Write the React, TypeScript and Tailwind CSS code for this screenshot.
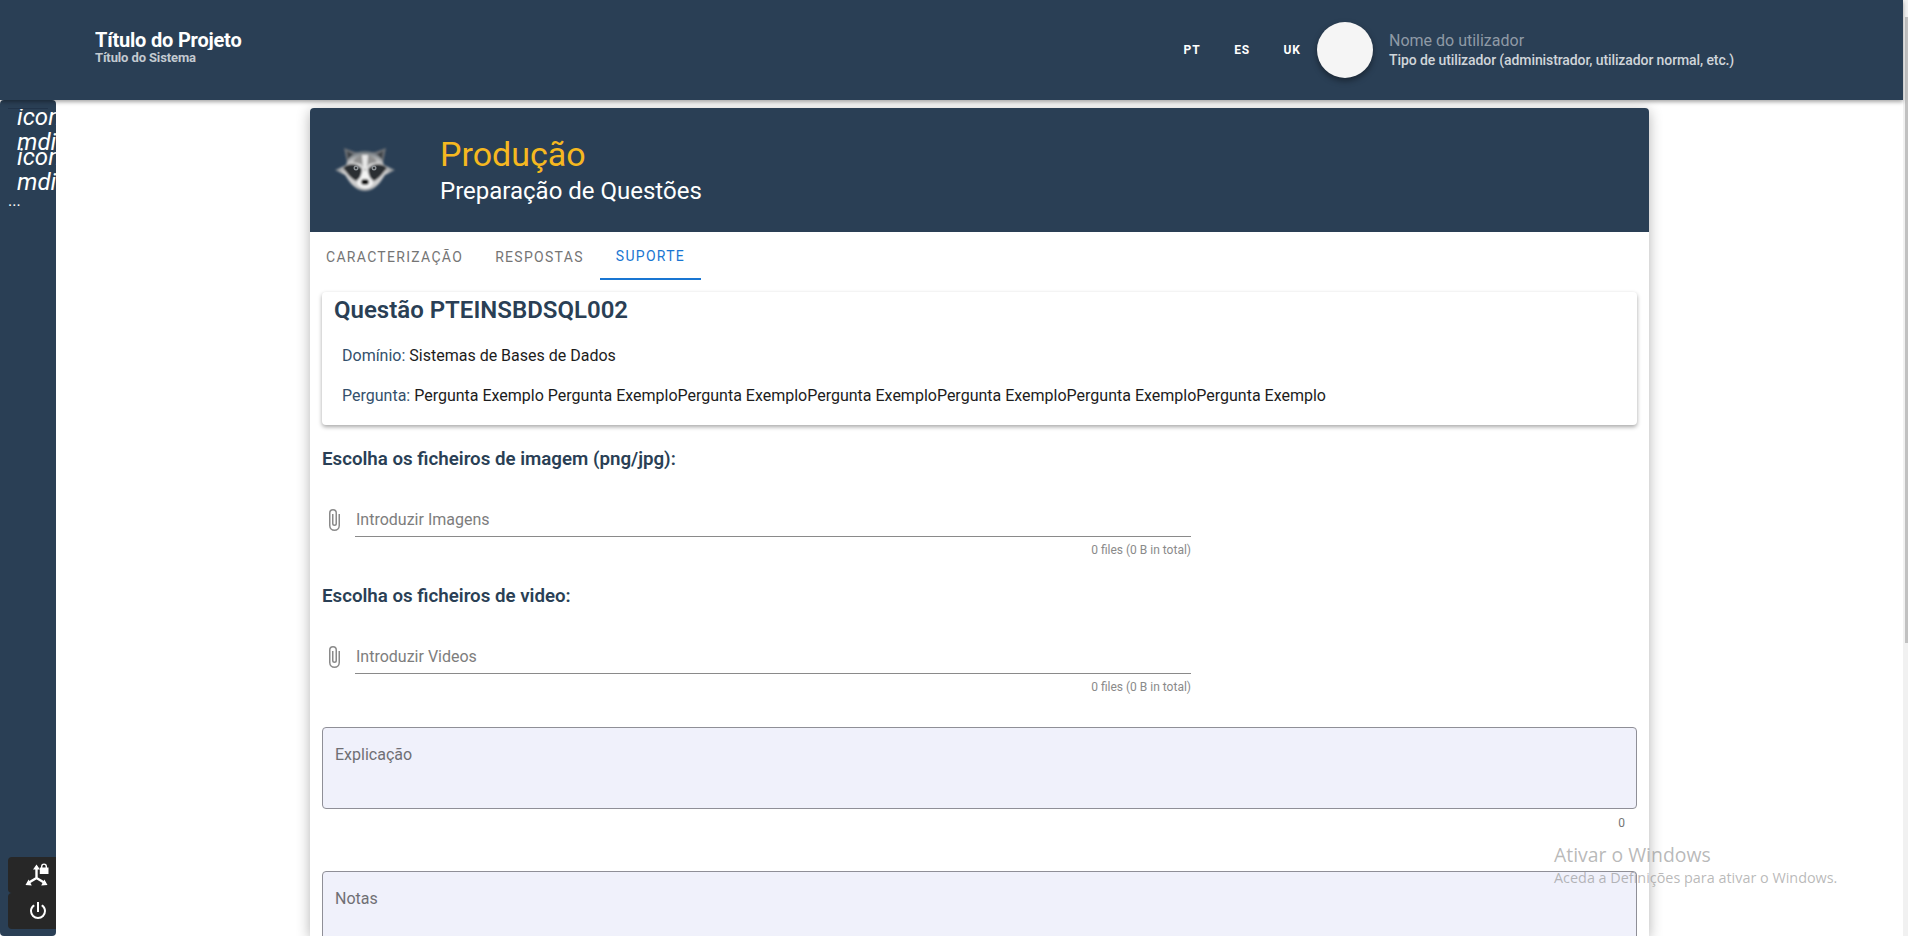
import React from 'react';

const NAVY = 'bg-[#2a3f55]';

function PaperclipIcon() {
  return (
    <svg viewBox="0 0 24 24" className="w-6 h-6 fill-[#8a8a8a] shrink-0">
      <path d="M16.5,6V17.5A4,4 0 0,1 12.5,21.5A4,4 0 0,1 8.5,17.5V5A2.5,2.5 0 0,1 11,2.5A2.5,2.5 0 0,1 13.5,5V15.5A1,1 0 0,1 12.5,16.5A1,1 0 0,1 11.5,15.5V6H10V15.5A2.5,2.5 0 0,0 12.5,18A2.5,2.5 0 0,0 15,15.5V5A4,4 0 0,0 11,1A4,4 0 0,0 7,5V17.5A5.5,5.5 0 0,0 12.5,23A5.5,5.5 0 0,0 18,17.5V6H16.5Z" />
    </svg>
  );
}

function AxisLockIcon() {
  return (
    <svg viewBox="0 0 24 24" className="w-6 h-6 -ml-[2px]">
      <path d="M11.5 15V5M11.5 15 4 19.5M11.5 15 19 19.5" stroke="white" strokeWidth="2.4" fill="none" />
      <path d="M11.5 1.5 8 6.5H15ZM0.5 22 6.8 22.4 3.6 16.4ZM22.5 22 16.2 22.4 19.4 16.4Z" fill="white" />
      <path d="M16 4.5V3.4A3 3 0 0 1 22 3.4V4.5H23.5V11H14.8V4.5ZM17.4 4.5H20.6V3.4A1.6 1.6 0 0 0 17.4 3.4Z" fill="white" />
    </svg>
  );
}

function PowerIcon() {
  return (
    <svg viewBox="0 0 24 24" className="w-6 h-6 fill-white">
      <path d="M16.56,5.44L15.11,6.89C16.84,7.94 18,9.83 18,12A6,6 0 0,1 12,18A6,6 0 0,1 6,12C6,9.83 7.16,7.94 8.88,6.88L7.44,5.44C5.36,6.88 4,9.28 4,12A8,8 0 0,0 12,20A8,8 0 0,0 20,12C20,9.28 18.64,6.88 16.56,5.44M13,3H11V13H13" />
    </svg>
  );
}

function RaccoonLogo() {
  return (
    <svg viewBox="0 0 64 50" className="w-16 h-[50px]">
      <defs>
        <filter id="soft" x="-20%" y="-20%" width="140%" height="140%">
          <feGaussianBlur stdDeviation="0.9" />
        </filter>
        <radialGradient id="fur" cx="50%" cy="55%" r="55%">
          <stop offset="0%" stopColor="#f2f2f2" />
          <stop offset="65%" stopColor="#c8c8c8" />
          <stop offset="100%" stopColor="#5f6870" />
        </radialGradient>
      </defs>
      <g filter="url(#soft)">
        <path d="M14 20 11 5 22 9 42 9 53 5 50 20Z" fill="#6d7176" />
        <path d="M15 16 14 8 21 12ZM49 16 50 8 43 12Z" fill="#3a3f44" />
        <path d="M32 8C21 8 15 15 13 22L2 27 12 32 16 38C21 45 27 48 32 48 37 48 43 45 48 38L52 32 62 27 51 22C49 15 43 8 32 8Z" fill="url(#fur)" />
        <path d="M32 12C26 12 22 15 20 19L28 21 32 28 36 21 44 19C42 15 38 12 32 12Z" fill="#8f8f8f" />
        <path d="M29 12H35L34 26H30Z" fill="#e8e8e8" />
        <path d="M10 25C16 19 25 21 29 26L28 34 23 38C18 36 14 30 10 25ZM54 25C48 19 39 21 35 26L36 34 41 38C46 36 50 30 54 25Z" fill="#2b2d30" />
        <path d="M28 32C30 28 34 28 36 32L40 41C36 47 28 47 24 41Z" fill="#f4f4f4" />
        <ellipse cx="32" cy="39" rx="4" ry="3" fill="#111" />
      </g>
      <circle cx="23" cy="25" r="2.5" fill="#8d9296" />
      <circle cx="41" cy="25" r="2.5" fill="#8d9296" />
      <circle cx="23" cy="25" r="1.1" fill="#2b2d30" />
      <circle cx="41" cy="25" r="1.1" fill="#2b2d30" />
    </svg>
  );
}

function FileField({ label, placeholder }: { label: string; placeholder: string }) {
  return (
    <div>
      <h3 className="text-[18.72px] leading-[22px] font-semibold text-[#2a3f55]">{label}</h3>
      <div className="flex items-start gap-[9px] mt-[38px]">
        <PaperclipIcon />
        <div className="w-[836px]">
          <div className="h-[29px] border-b border-[#8a8a8a] text-[16px] leading-[24px] text-[#7d7d7d] pl-[1px]">{placeholder}</div>
          <div className="text-right text-[12px] leading-[14px] text-[#8a8a8a] mt-[6px]">0 files (0 B in total)</div>
        </div>
      </div>
    </div>
  );
}

function TextBox({ label, className }: { label: string; className?: string }) {
  return (
    <div className={`h-[82px] shrink-0 bg-[#f0f1fb] border border-[#8f8f97] rounded-[4px] px-3 pt-[15px] text-[16px] leading-[24px] text-[#6f6f74] ${className ?? ''}`}>
      {label}
    </div>
  );
}

function SideGlyph() {
  return (
    <div className="h-10 pl-[17px] italic text-[24px] leading-[25px] text-white whitespace-nowrap">
      <span className="block">icon</span>
      <span className="block">mdi-</span>
    </div>
  );
}

export default function App() {
  return (
    <div className="h-[936px] w-[1908px] overflow-hidden bg-white relative font-['Roboto',sans-serif] flex flex-col">
      {/* Top bar */}
      <header className={`${NAVY} relative z-20 h-[100px] w-[1903px] shrink-0 flex items-center pl-[95px] shadow-[0_2px_4px_rgba(0,0,0,0.35)]`}>
        <div className="-mt-[7px]">
          <div className="text-[20px] leading-[22px] h-[21px] overflow-hidden font-bold tracking-[-0.2px] text-white">Título do Projeto</div>
          <div className="mt-[2px] text-[13px] leading-[12px] font-bold tracking-[-0.12px] text-[#c3cad1]">Título do Sistema</div>
        </div>
        <div className="ml-auto flex items-center">
          <div className="flex items-center text-[12px] font-bold tracking-[0.8px] text-white">
            <span className="w-[50px] text-center">PT</span>
            <span className="w-[50px] text-center">ES</span>
            <span className="w-[50px] text-center">UK</span>
          </div>
          <div className="w-14 h-14 rounded-full bg-[#f5f5f5] shadow-[0_3px_6px_rgba(0,0,0,0.4)]" />
          <div className="ml-4 w-[514px]">
            <div className="text-[16px] leading-[19px] text-[#8f9aa6]">Nome do utilizador</div>
            <div className="text-[14px] leading-[20px] font-medium text-[#d0d5da] tracking-[-0.1px]">Tipo de utilizador (administrador, utilizador normal, etc.)</div>
          </div>
        </div>
      </header>

      <div className="flex flex-1 min-h-0 w-[1903px]">
        {/* Side rail */}
        <aside className={`${NAVY} w-14 shrink-0 rounded-[4px] overflow-hidden flex flex-col relative`}>
          <div className="absolute left-2 top-2 w-10 h-px bg-[#22344a]" />
          <div className="pt-[5px] flex flex-col">
            <SideGlyph />
            <SideGlyph />
          </div>
          <div className="pl-2 mt-[9px] text-[16px] leading-[14px] text-white">...</div>
          <div className="mt-auto mb-[7px] ml-2 flex flex-col">
            <div className="h-9 bg-[#272727] rounded-l-[4px] flex items-center justify-center pl-3"><AxisLockIcon /></div>
            <div className="h-9 bg-[#272727] rounded-l-[4px] flex items-center justify-center pl-3"><PowerIcon /></div>
          </div>
        </aside>

        {/* Main */}
        <main className="flex-1 min-w-0 flex justify-center pt-2">
          <div className="w-[1339px] rounded-t-[4px] shadow-[0_3px_14px_rgba(0,0,0,0.3)] bg-white flex flex-col">
            <div className={`${NAVY} h-[124px] shrink-0 rounded-t-[4px] flex items-center pl-[23px]`}>
              <div className="w-[64px] -mt-[5px]"><RaccoonLogo /></div>
              <div className="ml-[43px] mt-[1px]">
                <div className="text-[34px] leading-[41px] text-[#f6b820]">Produção</div>
                <div className="text-[24px] leading-[32px] text-white">Preparação de Questões</div>
              </div>
            </div>

            <div className="h-[48px] shrink-0 flex text-[14px] font-normal tracking-[1.3px] text-[#757575] bg-white">
              <div className="px-4 flex items-center pt-[2px]">CARACTERIZAÇÃO</div>
              <div className="px-4 flex items-center pt-[2px]">RESPOSTAS</div>
              <div className="px-4 flex items-center pt-[2px] text-[#1976d2] border-b-2 border-[#1976d2]">SUPORTE</div>
            </div>

            <div className="pt-3 px-3 flex flex-col">
              <section className="h-[133px] rounded-[4px] shadow-[0_2px_4px_rgba(0,0,0,0.35)] pl-3">
                <h2 className="text-[24px] leading-[36px] font-semibold text-[#2a3f55]">Questão PTEINSBDSQL002</h2>
                <p className="pl-2 mt-[16px] text-[16px] leading-[24px] text-[#1c1c1c]"><span className="text-[#34506c]">Domínio:</span> Sistemas de Bases de Dados</p>
                <p className="pl-2 mt-[16px] text-[16px] leading-[24px] text-[#1c1c1c]"><span className="text-[#34506c]">Pergunta:</span> Pergunta Exemplo Pergunta ExemploPergunta ExemploPergunta ExemploPergunta ExemploPergunta ExemploPergunta Exemplo</p>
              </section>

              <div className="mt-[23px]">
                <FileField label="Escolha os ficheiros de imagem (png/jpg):" placeholder="Introduzir Imagens" />
              </div>
              <div className="mt-[28px]">
                <FileField label="Escolha os ficheiros de video:" placeholder="Introduzir Videos" />
              </div>

              <TextBox label="Explicação" className="mt-[33px]" />
              <div className="text-right text-[12px] leading-[14px] text-[#757575] pr-[12px] mt-[7px]">0</div>
              <TextBox label="Notas" className="mt-[41px]" />
            </div>
          </div>
        </main>
      </div>

      {/* Windows activation watermark */}
      <div className="absolute left-[1554px] top-[843px] z-30 font-['Open_Sans',sans-serif] text-[#8a8a8a]/60 pointer-events-none">
        <div className="text-[19.4px] leading-[24px]">Ativar o Windows</div>
        <div className="text-[14.4px] leading-[20px] mt-[1px]">Aceda a Definições para ativar o Windows.</div>
      </div>

      {/* Scrollbar */}
      <div className="absolute right-0 top-0 bottom-0 w-[5px] bg-[#f1f1f1]">
        <div className="ml-[2px] mt-[17px] w-[3px] h-[626px] bg-[#c1c1c1]" />
      </div>
    </div>
  );
}
